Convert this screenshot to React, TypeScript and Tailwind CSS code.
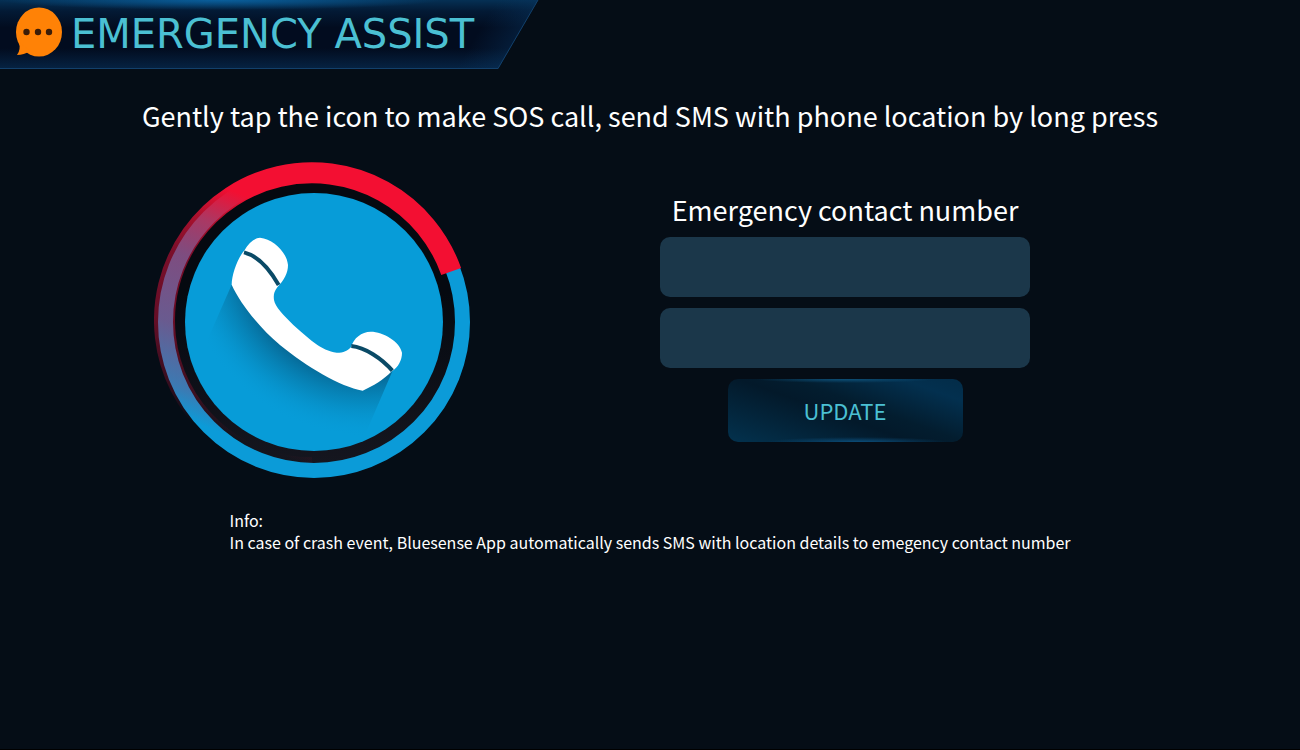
import { useState } from "react";

const HeaderShape = () => (
  <svg
    viewBox="0 0 540 70"
    preserveAspectRatio="none"
    className="absolute inset-0 w-full h-full"
    aria-hidden="true"
  >
    <defs>
      <linearGradient id="headerFade" x1="0" y1="0" x2="0" y2="1">
        <stop offset="0" stopColor="#053054" />
        <stop offset="0.16" stopColor="#031a35" />
        <stop offset="0.4" stopColor="#020c1f" />
        <stop offset="0.7" stopColor="#020c1f" />
        <stop offset="1" stopColor="#062343" />
      </linearGradient>
      <radialGradient
        id="headerGlow"
        cx="0"
        cy="0"
        r="1"
        gradientUnits="userSpaceOnUse"
        gradientTransform="translate(220 0) scale(220 10)"
      >
        <stop offset="0" stopColor="#0a64a4" stopOpacity="0.9" />
        <stop offset="1" stopColor="#0a64a4" stopOpacity="0" />
      </radialGradient>
      <linearGradient id="headerSide" x1="485" y1="20" x2="525" y2="44" gradientUnits="userSpaceOnUse">
        <stop offset="0" stopColor="#083560" stopOpacity="0" />
        <stop offset="1" stopColor="#083560" stopOpacity="0.5" />
      </linearGradient>
    </defs>
    <path d="M0 0H538L498 69H0Z" fill="url(#headerFade)" />
    <path d="M0 0H538L498 69H0Z" fill="url(#headerSide)" />
    <path d="M0 0H450V10H0Z" fill="url(#headerGlow)" />
    <path d="M538 0L498 68.5H0" fill="none" stroke="#12406b" />
  </svg>
);

const ChatIcon = () => (
  <svg width="48" height="52" viewBox="0 0 48 52" aria-hidden="true" className="shrink-0">
    <ellipse cx="24" cy="26" rx="23" ry="24.5" fill="#ff8206" />
    <path d="M4 36Q6 44 2 49Q9 49 15 45Z" fill="#ff8206" />
    <circle cx="11.5" cy="26" r="3.2" fill="#3a1c08" />
    <circle cx="23" cy="26" r="3.2" fill="#3a1c08" />
    <circle cx="34" cy="26" r="3.2" fill="#3a1c08" />
  </svg>
);

const CallIcon = () => (
  <svg viewBox="42 36 948 948" className="w-[316px] h-[316px]" aria-hidden="true">
    <defs>
      <linearGradient id="ringFade" x1="330" y1="60" x2="30" y2="860" gradientUnits="userSpaceOnUse">
        <stop offset="0.09" stopColor="#f30f32" />
        <stop offset="0.22" stopColor="#e81236" stopOpacity="0.72" />
        <stop offset="0.36" stopColor="#d80f3a" stopOpacity="0.56" />
        <stop offset="0.6" stopColor="#d80f3a" stopOpacity="0.46" />
        <stop offset="0.8" stopColor="#d80f3a" stopOpacity="0.24" />
        <stop offset="0.9" stopColor="#d80f3a" stopOpacity="0" />
      </linearGradient>
      <radialGradient id="phoneShadow" cx="680" cy="300" r="560" gradientUnits="userSpaceOnUse">
        <stop offset="0.68" stopColor="#06638f" stopOpacity="0.9" />
        <stop offset="0.82" stopColor="#067cad" stopOpacity="0.55" />
        <stop offset="1" stopColor="#079cd8" stopOpacity="0" />
      </radialGradient>
      <linearGradient id="gapFade" x1="0" y1="0" x2="0" y2="1">
        <stop offset="0.4" stopColor="#050910" />
        <stop offset="1" stopColor="#15161f" />
      </linearGradient>
    </defs>
    <circle cx="522" cy="516" r="430" fill="url(#gapFade)" />
    <circle cx="522" cy="516" r="445.5" fill="none" stroke="#0b9bd8" strokeWidth="45" />
    <path
      d="M933.6 364.7A442.5 442.5 0 1 0 516 953.5"
      fill="none"
      stroke="url(#ringFade)"
      strokeWidth="63"
    />
    <circle cx="522" cy="516" r="387" fill="#079cd8" />
    <path
      d="M275 404L180 620L400 890L660 890L757 664L668 722L420 585Z"
      fill="url(#phoneShadow)"
    />
    <path
      d="M275 404C276 372 292 325 314 300C326 278 344 264 360 263C400 268 440 305 444 345C444 370 432 390 412 412C402 425 400 435 402 450C405 470 430 495 460 525C500 560 545 604 590 608C612 608 622 602 634 590C640 565 665 545 692 545C730 545 780 575 786 608C786 630 775 652 755 664C730 690 700 708 668 722C600 710 500 650 420 585C360 535 300 460 275 404Z"
      fill="#ffffff"
    />
    <path
      d="M312 307C355 318 390 360 416 405M634 588C675 592 725 625 757 662"
      fill="none"
      stroke="#0a4a66"
      strokeWidth="12"
    />
  </svg>
);

export default function App() {
  const [primary, setPrimary] = useState("");
  const [secondary, setSecondary] = useState("");

  return (
    <div className="min-h-screen bg-[#050d16] border-b border-black text-white font-['Noto_Sans_CJK_JP','Noto_Sans',sans-serif]">
      <header className="relative w-[540px] h-[70px]">
        <HeaderShape />
        <div className="relative flex items-center gap-2 h-16 pl-[15px]">
          <ChatIcon />
          <h1 className="pt-1 font-['DejaVu_Sans',sans-serif] text-[40px] leading-none text-[#4bc0d3] whitespace-nowrap">
            EMERGENCY ASSIST
          </h1>
        </div>
      </header>

      <main>
        <p className="pt-[26px] text-center text-[27px] leading-[40px]">
          Gently tap the icon to make SOS call, send SMS with phone location by long press
        </p>

        <div className="mt-[26px] grid grid-cols-[48fr_34fr_18fr] justify-items-center">
          <button type="button" aria-label="Make SOS call" className="rounded-full cursor-pointer">
            <CallIcon />
          </button>

          <form
            onSubmit={(e) => e.preventDefault()}
            className="w-[370px] pt-7 flex flex-col items-center"
          >
            <label id="contact-label" htmlFor="contact-1" className="text-[27px] leading-[40px]">
              Emergency contact number
            </label>
            <input
              id="contact-1"
              type="tel"
              value={primary}
              onChange={(e) => setPrimary(e.target.value)}
              className="mt-[7px] w-full h-[60px] px-4 rounded-[10px] bg-[#1b374a] text-2xl outline-none"
            />
            <input
              id="contact-2"
              type="tel"
              aria-labelledby="contact-label"
              value={secondary}
              onChange={(e) => setSecondary(e.target.value)}
              className="mt-[11px] w-full h-[60px] px-4 rounded-[10px] bg-[#1b374a] text-2xl outline-none"
            />
            <button
              type="submit"
              className="mt-[11px] w-[235px] h-[63px] rounded-[10px] bg-[radial-gradient(90px_4px_at_50%_0%,#0d5078,transparent),radial-gradient(90px_5px_at_55%_100%,#0b4c78,transparent),linear-gradient(20deg,#03324e_0%,#03243a_25%,#03192a_45%,#031d2f_58%,#03304f_85%,#032c48_100%)] font-['Noto_Sans_CJK_JP',sans-serif] text-[22px] text-[#4bc0d3] cursor-pointer"
            >
              UPDATE
            </button>
          </form>
        </div>

        <div className="mt-[31px] flex justify-center text-[16px] leading-[22px]">
          <p>
            Info:
            <br />
            In case of crash event, Bluesense App automatically sends SMS with location details to emegency contact number
          </p>
        </div>
      </main>
    </div>
  );
}
